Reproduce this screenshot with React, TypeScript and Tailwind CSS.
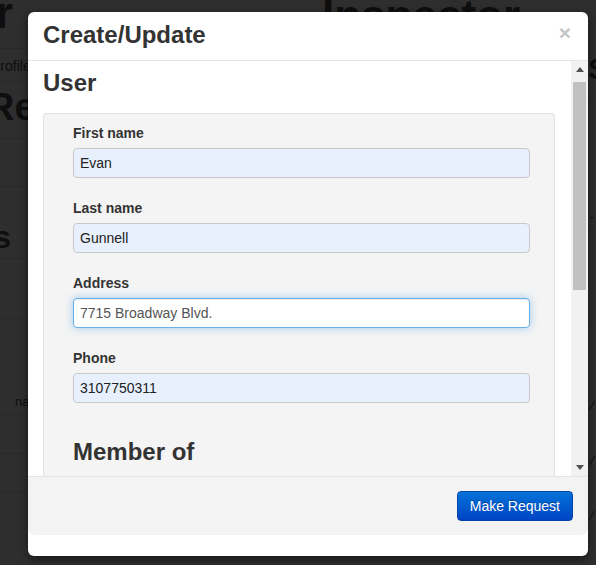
export default function App() {
  const fields = [
    { label: 'First name', value: 'Evan', focused: false },
    { label: 'Last name', value: 'Gunnell', focused: false },
    { label: 'Address', value: '7715 Broadway Blvd.', focused: true },
    { label: 'Phone', value: '3107750311', focused: false },
  ];

  return (
    <div className="relative h-[565px] w-[596px] overflow-hidden bg-[#2e2e2e] font-['Liberation_Sans',Arial,sans-serif] text-[#0e0e0e]">
      {/* Page behind the backdrop */}
      <div className="flex">
        <div className="w-[322px] shrink-0">
          <div className="h-[58px] border-b border-[#282828]">
            <div className="-mt-[9px] flex w-[13px] justify-end">
              <span className="whitespace-nowrap text-[44px] font-bold leading-none">Manager</span>
            </div>
          </div>
          <div className="h-[33px] border-b border-[#282828] pt-[5px]">
            <span className="-ml-[9px] whitespace-nowrap text-[14px] leading-[20px]">Profile</span>
          </div>
          <div className="h-[57px] border-b border-[#282828] pt-[3px]">
            <span className="-ml-[13px] whitespace-nowrap text-[38px] font-bold leading-[44px]">Records</span>
          </div>
          <div className="h-[48px] border-b border-[#282828]" />
          <div className="h-[72px] border-b border-[#282828] pt-[30px]">
            <div className="flex w-[11px] justify-end">
              <span className="whitespace-nowrap text-[32px] font-bold leading-[40px]">Items</span>
            </div>
          </div>
          <div className="h-[60px] border-b border-[#282828]" />
          <div className="h-[96px] border-b border-[#282828] pt-[70px] pl-[15px]">
            <span className="whitespace-nowrap text-[13px] leading-[20px]">name</span>
          </div>
          <div className="h-[39px] border-b border-[#282828]" />
          <div className="h-[39px] border-b border-[#282828]" />
        </div>
        <div className="flex-1">
          <div className="-mt-[6px] whitespace-nowrap text-[44px] font-bold leading-none">Inspector</div>
          <div className="h-[64px] border-b border-[#282828] pl-[266px] pt-[14px]">
            <span className="whitespace-nowrap text-[30px] font-bold leading-[34px]">Status</span>
          </div>
          <div className="h-[130px] border-b border-[#282828] pl-[266px] pt-[102px]">
            <span className="whitespace-nowrap font-['Liberation_Mono',monospace] text-[13px]">-[</span>
          </div>
          <div className="h-[95px] border-b border-[#282828]" />
          <div className="pl-[266px] pt-[52px] font-['Liberation_Mono',monospace] text-[13px] leading-[55px]">
            <div>/</div>
            <div>/</div>
            <div>/</div>
          </div>
        </div>
      </div>

      {/* Modal */}
      <div className="absolute left-0 top-0 pl-[28px] pt-[12px]">
        <div className="flex h-[544px] w-[560px] flex-col overflow-hidden rounded-[6px] bg-white text-[#333] shadow-[0_3px_9px_rgba(0,0,0,0.5)]">
          {/* Header */}
          <div className="flex h-[49px] shrink-0 items-start justify-between border-b border-[#e5e5e5] pl-[15px] pr-[17px] pt-[10px]">
            <h1 className="text-[24px] font-bold leading-[26px]">Create/Update</h1>
            <span className="mt-[1px] text-[21px] font-bold leading-[20px] text-[#c4c4c4]">×</span>
          </div>

          {/* Body */}
          <div className="flex h-[415px] shrink-0">
            <div className="flex-1 overflow-hidden pl-[15px] pr-[16px] pt-[9px]">
              <h2 className="text-[24px] font-bold leading-[26px]">User</h2>
              <div className="mt-[17px] rounded-t-[4px] border border-b-0 border-[#e3e3e3] bg-[#f4f4f4] pl-[29px] pr-[24px] pt-[9px] pb-[40px]">
                {fields.map((f) => (
                  <div key={f.label} className="mb-[20px]">
                    <label className="mb-[5px] block text-[14px] font-bold leading-[20px]">{f.label}</label>
                    <div
                      className={
                        f.focused
                          ? 'flex h-[30px] items-center rounded-[4px] border border-[#66afe9] bg-white pl-[6px] text-[14px] text-[#555] shadow-[inset_0_1px_1px_rgba(0,0,0,0.075),0_0_8px_rgba(102,175,233,0.6)]'
                          : 'flex h-[30px] items-center rounded-[4px] border border-[#c8c8c8] bg-[#e8f0fe] pl-[6px] text-[14px] text-[#222]'
                      }
                    >
                      {f.value}
                    </div>
                  </div>
                ))}
                <h3 className="mt-[36px] text-[24px] font-bold leading-[26px]">Member of</h3>
              </div>
            </div>
            {/* Scrollbar */}
            <div className="flex w-[17px] shrink-0 flex-col bg-[#f1f1f1]">
              <div className="flex h-[17px] items-center justify-center">
                <svg width="8" height="5" viewBox="0 0 8 5">
                  <path d="M0 5 L4 0 L8 5 Z" fill="#505050" />
                </svg>
              </div>
              <div className="flex-1 px-[2px] pt-[4px]">
                <div className="h-[208px] bg-[#c1c1c1]" />
              </div>
              <div className="flex h-[17px] items-center justify-center">
                <svg width="8" height="5" viewBox="0 0 8 5">
                  <path d="M0 0 L8 0 L4 5 Z" fill="#505050" />
                </svg>
              </div>
            </div>
          </div>

          {/* Footer */}
          <div className="flex h-[59px] shrink-0 justify-end rounded-b-[6px] border-t border-[#e5e5e5] bg-[#f3f3f3] pr-[15px] pt-[14px]">
            <button className="h-[30px] rounded-[4px] border border-[#0044aa] bg-gradient-to-b from-[#0a72d8] to-[#0044c4] px-[12px] text-[14px] text-white [text-shadow:0_-1px_0_rgba(0,0,0,0.25)]">
              Make Request
            </button>
          </div>
          <div className="flex-1" />
        </div>
      </div>
    </div>
  );
}
